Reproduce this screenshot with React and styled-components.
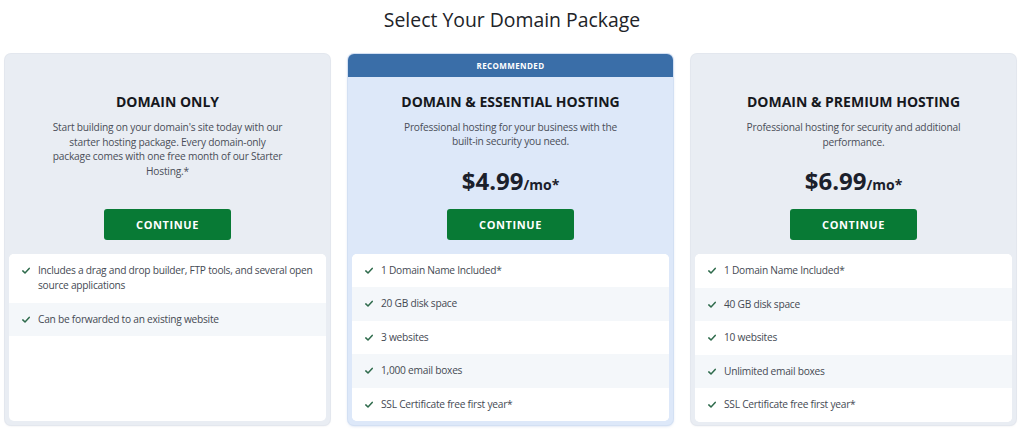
import React from "react";
import styled, { createGlobalStyle } from "styled-components";

const GlobalStyle = createGlobalStyle`
  html, body { margin: 0; padding: 0; background: #ffffff; }
  body { font-family: "Open Sans", "Noto Sans", Arial, sans-serif; -webkit-font-smoothing: antialiased; }
  * { box-sizing: border-box; }
`;

const Page = styled.div`
  width: 1024px;
  height: 430px;
  overflow: hidden;
  padding: 6px 8px 0 5px;
  display: flex;
  flex-direction: column;
`;

const Heading = styled.h1`
  margin: 0 0 20px;
  font-size: 19.4px;
  line-height: 28px;
  font-weight: 400;
  color: #212328;
  text-align: center;
  padding-left: 3px;
`;

const Grid = styled.div`
  display: grid;
  grid-template-columns: repeat(3, 325px);
  column-gap: 18px;
  align-items: stretch;
  height: 371px;
`;

const Card = styled.section`
  display: flex;
  flex-direction: column;
  border-radius: 6px;
  overflow: hidden;
  background: ${(p) => (p.$featured ? "#dde8f9" : "#e9edf3")};
  box-shadow: ${(p) =>
    p.$featured
      ? "0 0 0 1px #d3e0f3, 0 1px 3px rgba(90,130,200,0.35)"
      : "0 0 0 1px #e3e7ee, 0 1px 2px rgba(120,130,150,0.2)"};
`;

const Ribbon = styled.div`
  height: 23px;
  background: #3a6ea8;
  color: #ffffff;
  font-size: 8px;
  font-weight: 700;
  letter-spacing: 0.4px;
  display: flex;
  align-items: center;
  justify-content: center;
`;

const Body = styled.div`
  padding-top: ${(p) => (p.$featured ? "15px" : "38px")};
  display: flex;
  flex-direction: column;
  align-items: center;
  flex: 1;
`;

const Intro = styled.div`
  height: 117px;
  display: flex;
  flex-direction: column;
  align-items: center;
  text-align: center;
`;

const PlanName = styled.h2`
  margin: 0;
  font-size: 14px;
  line-height: 20px;
  font-weight: 700;
  color: #16181d;
`;

const Description = styled.p`
  margin: 8px 0 0;
  font-size: 10.2px;
  letter-spacing: -0.2px;
  line-height: 14.5px;
  color: #4a4e58;
`;

const DescLine = styled.span`
  display: block;
  white-space: nowrap;
`;

const Price = styled.div`
  margin-top: 17px;
  font-size: 24px;
  line-height: 30px;
  font-weight: 700;
  color: #1b202b;
`;

const Per = styled.span`
  font-size: 14px;
  font-weight: 700;
`;

const ContinueButton = styled.button`
  width: 127px;
  height: 31px;
  border: none;
  border-radius: 3px;
  background: #087a35;
  color: #ffffff;
  font-family: inherit;
  font-size: 11px;
  font-weight: 700;
  letter-spacing: 0.6px;
  cursor: pointer;
`;

const Features = styled.ul`
  list-style: none;
  margin: 14px 4px 4px;
  padding: 0;
  align-self: stretch;
  flex: 1;
  background: #ffffff;
  border-radius: 5px;
  overflow: hidden;
`;

const Feature = styled.li`
  display: flex;
  align-items: flex-start;
  gap: 8px;
  padding: 9.25px 10px 9.25px 13px;
  font-size: 10.2px;
  letter-spacing: -0.25px;
  line-height: 15px;
  color: #454a53;
  background: ${(p) => (p.$alt ? "#f4f7fa" : "#ffffff")};
`;

const CheckMark = styled.svg`
  flex: none;
  width: 8px;
  height: 15px;
`;

const Check = () => (
  <CheckMark viewBox="0 0 8 15">
    <polyline
      points="0.8,7.9 3,10 7.2,5.4"
      fill="none"
      stroke="#2f6b4c"
      strokeWidth="1.5"
      strokeLinecap="round"
      strokeLinejoin="round"
    />
  </CheckMark>
);

const plans = [
  {
    name: "DOMAIN ONLY",
    desc: [
      "Start building on your domain's site today with our",
      "starter hosting package. Every domain-only",
      "package comes with one free month of our Starter",
      "Hosting.*",
    ],
    features: [
      "Includes a drag and drop builder, FTP tools, and several open source applications",
      "Can be forwarded to an existing website",
    ],
  },
  {
    name: "DOMAIN & ESSENTIAL HOSTING",
    featured: true,
    desc: ["Professional hosting for your business with the", "built-in security you need."],
    price: "$4.99",
    features: [
      "1 Domain Name Included*",
      "20 GB disk space",
      "3 websites",
      "1,000 email boxes",
      "SSL Certificate free first year*",
    ],
  },
  {
    name: "DOMAIN & PREMIUM HOSTING",
    desc: ["Professional hosting for security and additional", "performance."],
    price: "$6.99",
    features: [
      "1 Domain Name Included*",
      "40 GB disk space",
      "10 websites",
      "Unlimited email boxes",
      "SSL Certificate free first year*",
    ],
  },
];

export default function App() {
  return (
    <>
      <GlobalStyle />
      <Page>
        <Heading>Select Your Domain Package</Heading>
        <Grid>
          {plans.map((plan) => (
            <Card key={plan.name} $featured={plan.featured}>
              {plan.featured && <Ribbon>RECOMMENDED</Ribbon>}
              <Body $featured={plan.featured}>
                <Intro>
                  <PlanName>{plan.name}</PlanName>
                  <Description>
                    {plan.desc.map((line) => (
                      <DescLine key={line}>{line}</DescLine>
                    ))}
                  </Description>
                  {plan.price && (
                    <Price>
                      {plan.price}
                      <Per>/mo*</Per>
                    </Price>
                  )}
                </Intro>
                <ContinueButton>CONTINUE</ContinueButton>
                <Features>
                  {plan.features.map((f, i) => (
                    <Feature key={f} $alt={i % 2 === 1}>
                      <Check />
                      <span>{f}</span>
                    </Feature>
                  ))}
                </Features>
              </Body>
            </Card>
          ))}
        </Grid>
      </Page>
    </>
  );
}
